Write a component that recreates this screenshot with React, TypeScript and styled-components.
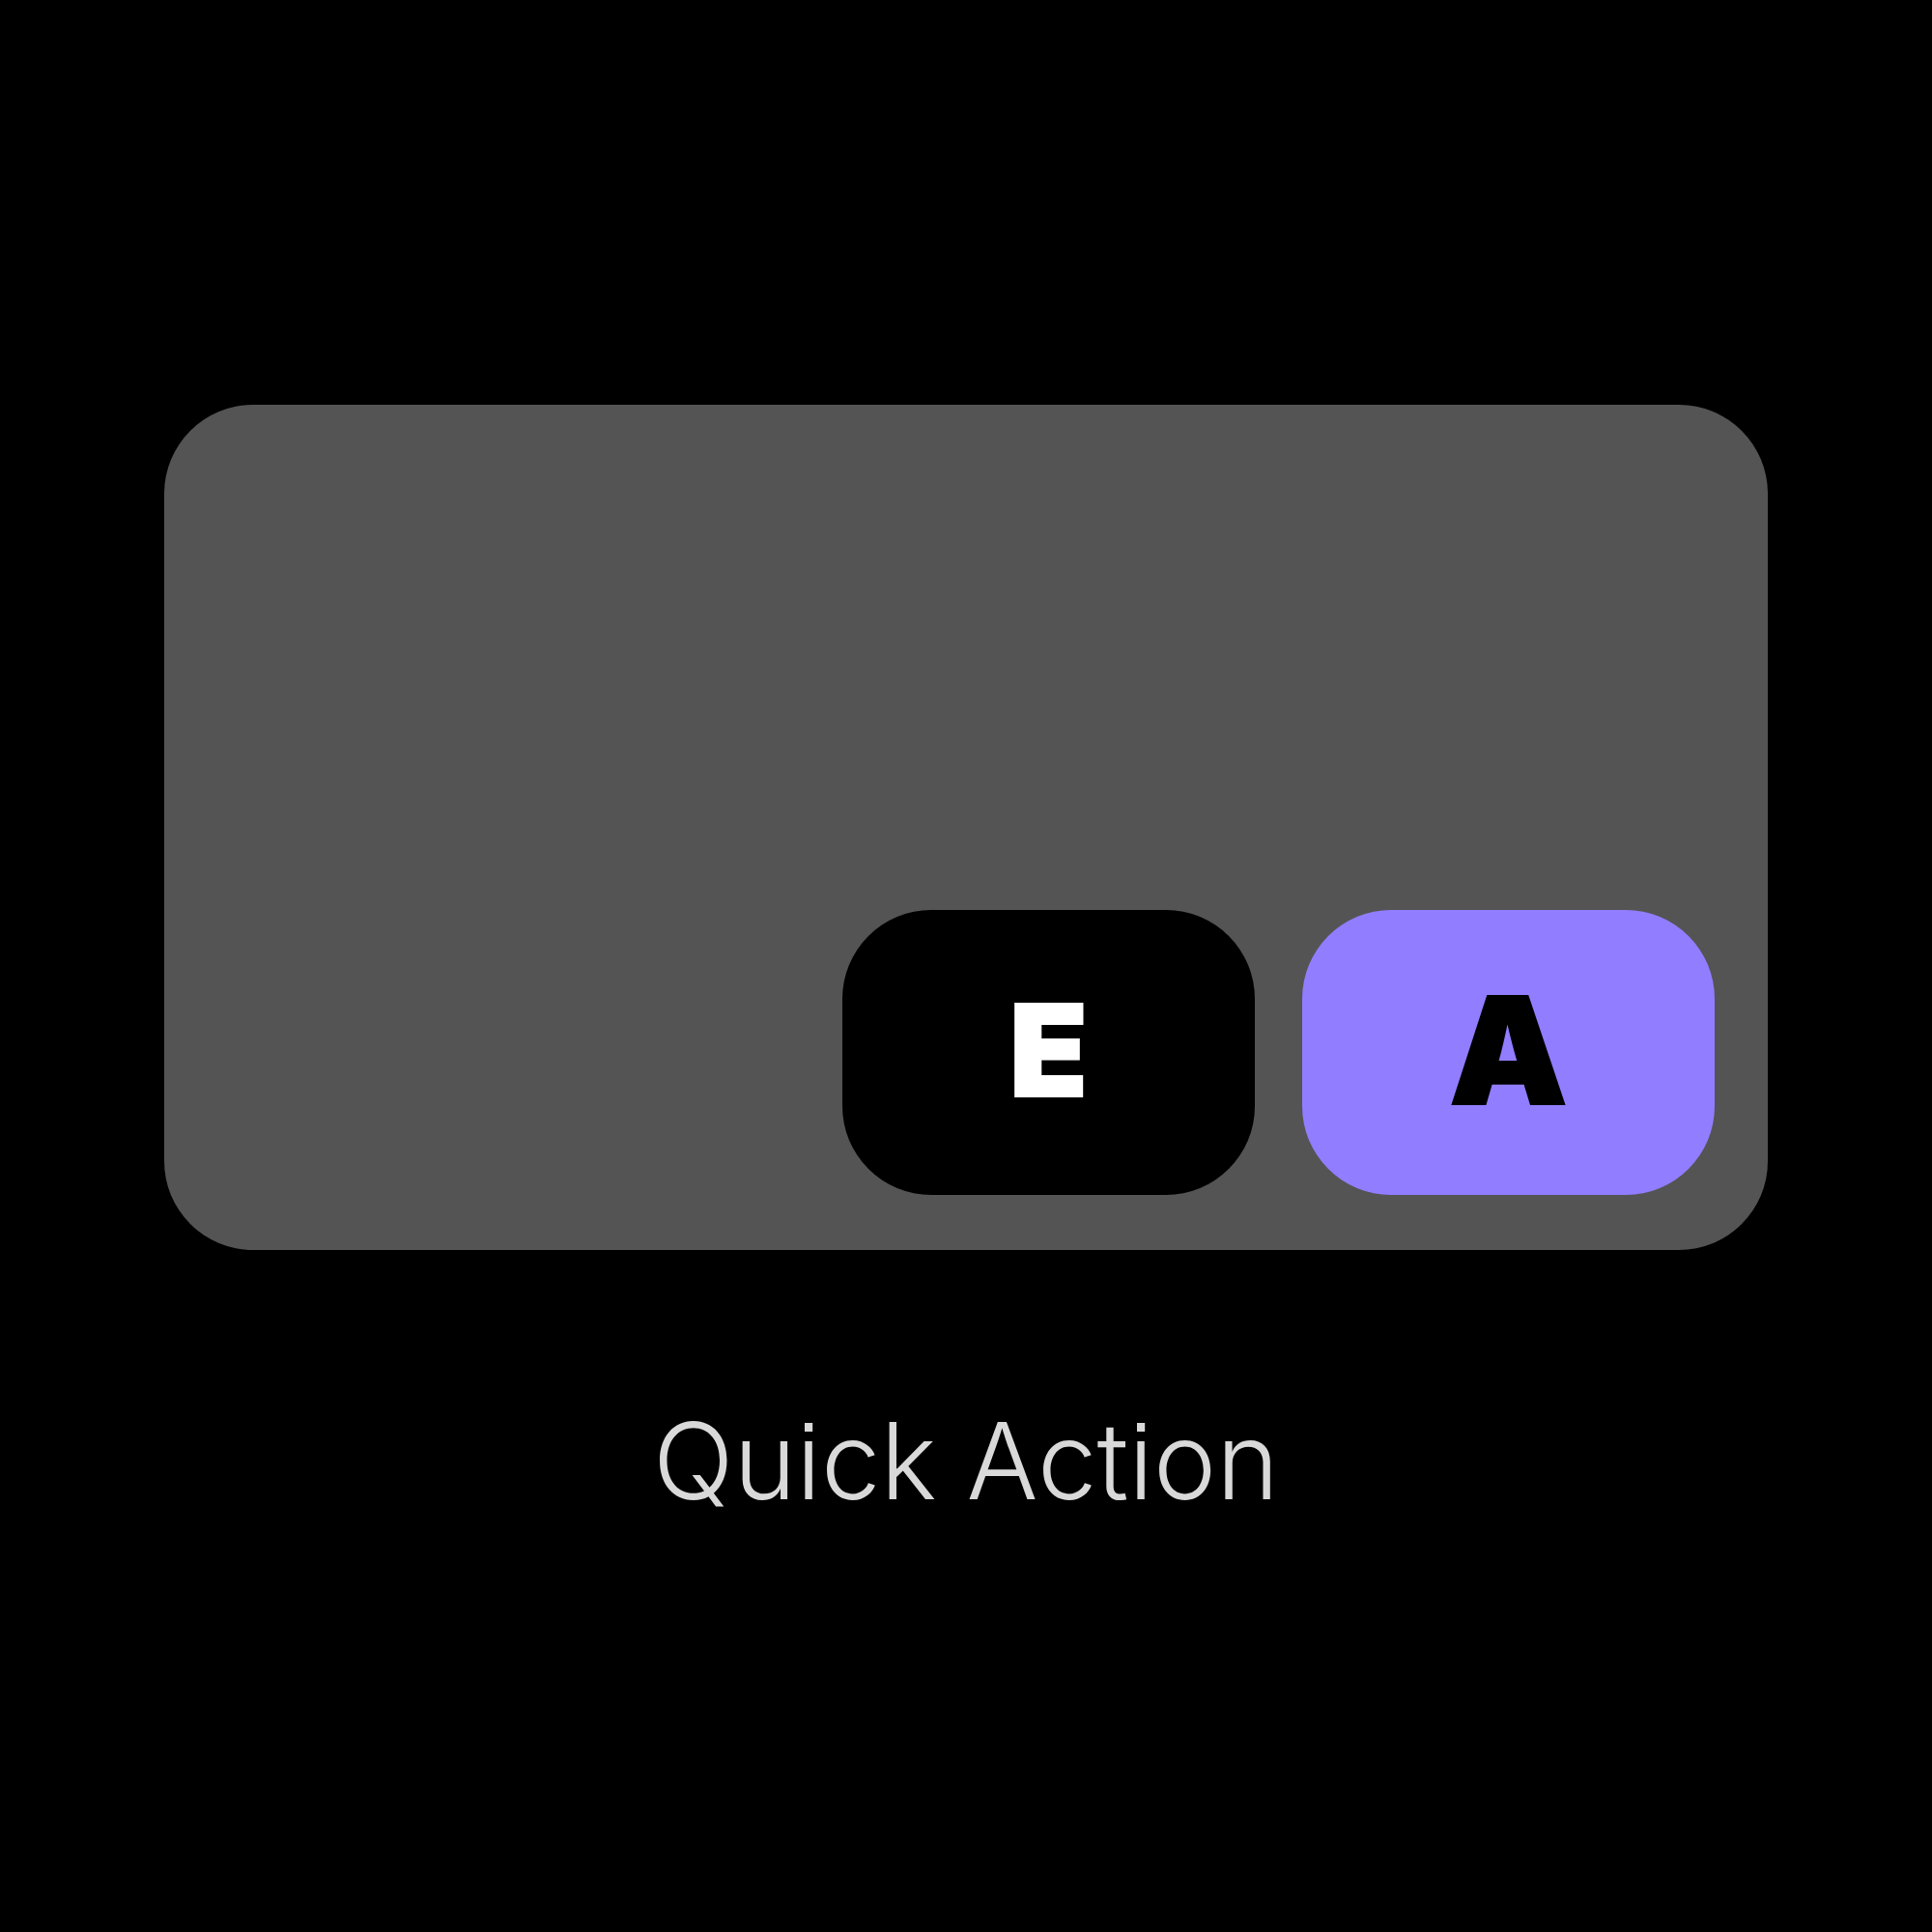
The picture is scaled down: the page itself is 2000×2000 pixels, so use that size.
import React from "react";
import styled, { createGlobalStyle } from "styled-components";

const GlobalStyle = createGlobalStyle`
  *, *::before, *::after { box-sizing: border-box; }
  body { margin: 0; background: #000000; }
`;

const Page = styled.main`
  min-height: 100vh;
  display: flex;
  flex-direction: column;
  align-items: center;
  justify-content: center;
  gap: 148px;
  background: #000000;
`;

const Card = styled.section`
  width: 83%;
  min-height: 875px;
  display: flex;
  align-items: flex-end;
  justify-content: flex-end;
  gap: 49px;
  padding: 56px 55px 57px;
  border-radius: 92px;
  background: #545454;
`;

const ActionButton = styled.button<{ $background: string; $color: string; $size: number }>`
  flex: 0 1 427px;
  height: 295px;
  padding: 0 0 5px;
  border: 0;
  border-radius: 92px;
  background: ${(p) => p.$background};
  color: ${(p) => p.$color};
  font: 900 ${(p) => p.$size}px/1 Inter, "Liberation Sans", sans-serif;
  -webkit-text-stroke: 2px currentColor;
  cursor: pointer;
`;

const Caption = styled.h1`
  margin: 0;
  color: #d9d9d9;
  font: 300 110px/140px Inter, "Open Sans", sans-serif;
  font-feature-settings: "ss07";
  text-align: center;
`;

export default function App() {
  return (
    <>
      <GlobalStyle />
      <Page>
        <Card aria-labelledby="caption">
          <ActionButton type="button" $background="#000000" $color="#ffffff" $size={132}>
            E
          </ActionButton>
          <ActionButton type="button" $background="#917dff" $color="#000000" $size={154}>
            A
          </ActionButton>
        </Card>
        <Caption id="caption">Quick Action</Caption>
      </Page>
    </>
  );
}
